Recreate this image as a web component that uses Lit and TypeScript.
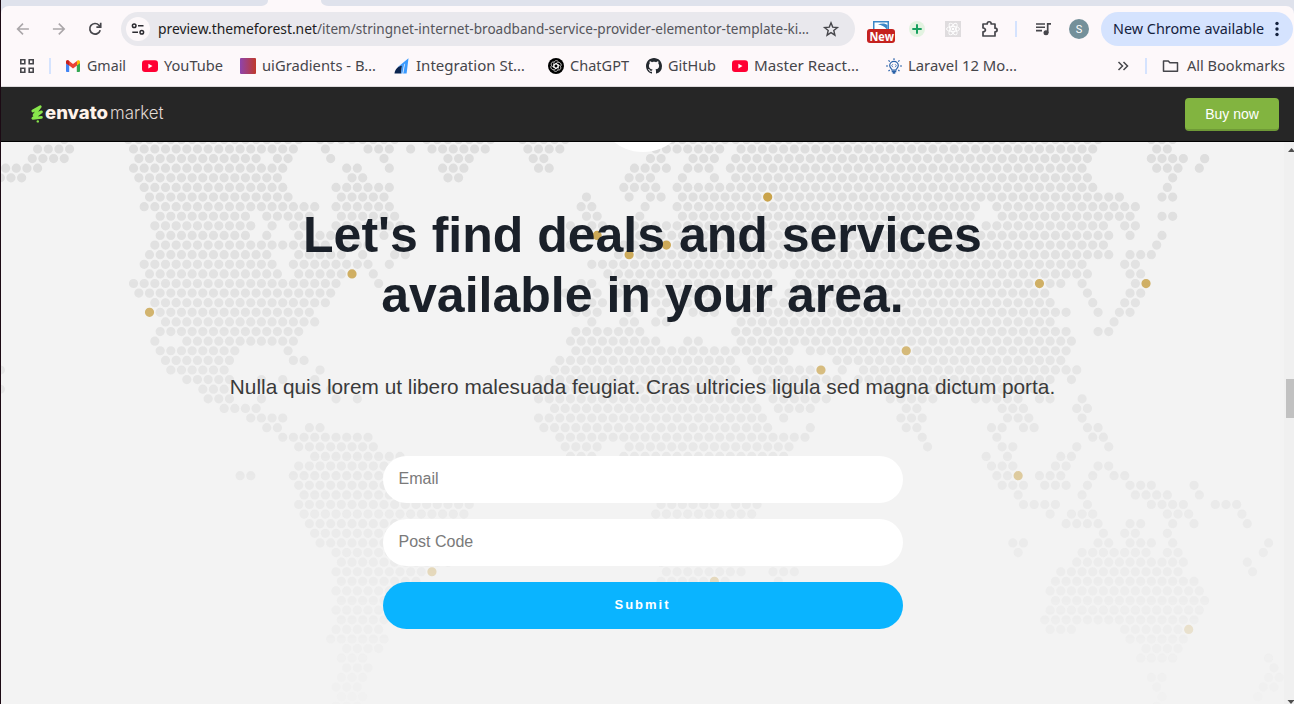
import { LitElement, html, svg, css } from "lit";
import { customElement } from "lit/decorators.js";

/* Dotted world map: for each lattice row, the horizontal spans that hold dots. */
const MAP_ROWS: string[] = [
  "64 128-302 320-395 430-490 520-560 640-1095 1150-1175",
  "38-70 134-294 326 368-389 411 432-485 528-560 656-720 741-1093 1157-1167",
  "32-64 139-256 278-288 331 384 448-469 533-544 650-661 693-714 736-1087 1151-1183 1204",
  "6-38 134-283 347-357 389 443-464 539-549 634-666 688-709 730-1082 1157-1178 1199",
  "1-22 139-278 352-363 448-459 629-650 682 714 736-1087 1172",
  "144-283 336-389 624-656 677-1093 1167",
  "150-288 341-384 586 629 650-661 682-1119 1162-1173",
  "144-315 336-389 581-592 645 677-975 997-1135",
  "160-246 267-310 341-395 586-597 640 682-970 1002-1130 1162-1173",
  "155-251 272 294-304 336-400 570 592-602 634-645 661-965 986-1107 1125-1135",
  "160-246 267 299 320-352 384 576-586 640 661-970 981-1109 1130 1162",
  "155-326 347-368 400 570 624-656 677-1103 1157",
  "150-267 299-343 363 395-405 618 640-1109 1130-1151",
  "144-272 294-368 389 592-1082 1125-1135",
  "150-278 299-341 373 608-720 736-768 800-1087 1130-1141",
  "134-336 378 581-592 613-715 741-768 795-1031 1050-1061 1082 1135",
  "139-294 310-331 565-575 597 618 650-715 736-763 784-1045 1087 1130-1141",
  "155-325 581-602 634 656-666 688-709 731-1050 1093 1125-1135",
  "160-310 576-597 634 661 693-714 740-1066 1098 1119-1130",
  "166-315 592 624-634 656-666 736-1050 1114",
  "160-299 576-639 736-1066 1098-1109",
  "155 187-294 571-655 687-698 742-1071",
  "160-235 288 576-788 810-1066",
  "166-230 294-304 560-730 752-783 837-1061",
  "1 171-224 320 555-737 757-810 842 864-1077",
  "187-230 262 283 315 539-730 762-834 858-1050 1071",
  "1 203-224 299 330 544-736 768-815 885-1045",
  "208-230 262 336 357 539-755 774-827 890-933 975-1018 1039-1050 1082",
  "224-256 555-757 778-810 906-917 1002-1023 1077-1087",
  "251-283 539-763 783 900-922 1007-1029 1082",
  "267-278 310-320 544-768 810 906-917 991-1002 1023-1034 1087-1098",
  "283-368 560-805 922 997 1093-1103",
  "299-373 565-598 630-788 927 1002-1013 1077 1109",
  "315-400 571-592 624-784 986 1007 1061-1071",
  "299-410 991-1013 1055-1066 1098-1109",
  "240-251 294-410 997-1007 1039-1061 1093 1114-1125",
  "299-410 1002-1023 1045-1066 1087 1130-1151 1194",
  "304-410 1018 1082 1135-1167 1199",
  "299-470 662-715 736-757 1023-1055 1087 1151-1183 1215-1237",
  "304-464 656-752 1050 1071-1093 1167-1188 1242",
  "310-460 1066-1098 1130-1141 1173 1194 1247",
  "315-440 1103 1125-1135 1167",
  "320-440 1013-1023 1098-1109 1130-1151 1173 1268",
  "336-440 1018 1082-1146 1167-1178 1263",
  "342-448 661 1077-1183 1247",
  "336-421 667-741 773-794 1061-1178 1252",
  "342-416 661-704 725 778 1055-1194",
  "336-400 1050-1199",
  "342-400 1055-1204",
  "336-400 1050-1199",
  "342-400 1045-1194",
  "336-379 1050-1071 1125-1178",
  "331-385 1130-1183",
  "347-379 1146-1178",
  "342-363 1141-1173 1268",
  "347-368 1274",
  "342-363 1151-1162 1268-1279",
  "336-358 1157 1263-1274",
  "342-363 1162 1258",
  "336-358 1152",
];

/* Highlighted cities: [row, x]. */
const CITIES: [number, number][] = [
  [5, 767.5], [9, 597], [10, 666], [11, 629], [13, 352], [14, 1039], [14, 1146],
  [17, 149.7], [21, 906], [23, 821], [34, 1018], [44, 432], [45, 714], [50, 1188.5],
];

const STEP = 5.329;
const ORIGIN = 0.3;
const dotY = (row: number) => 7 + row * 9.608;
/* Odd and even rows are shifted by half a cell. */
const snap = (x: number, row: number) => {
  const odd = Math.abs(row + 1) % 2;
  return 2 * Math.round(((x - ORIGIN) / STEP - odd) / 2) + odd;
};
const dot = (h: number, row: number) =>
  `M${(ORIGIN + h * STEP - 4.6).toFixed(2)} ${dotY(row).toFixed(2)}a4.6 4.6 0 1 0 9.2 0a4.6 4.6 0 1 0 -9.2 0`;

const gold = new Set(CITIES.map(([r, x]) => `${r}:${snap(x, r)}`));
const landPath = MAP_ROWS.map((spans, i) => {
  const row = i - 1;
  let d = "";
  for (const span of spans.split(" ")) {
    const [a, b = a] = span.split("-").map(Number);
    for (let h = snap(a, row); h <= snap(b, row); h += 2) {
      if (!gold.has(`${row}:${h}`)) d += dot(h, row);
    }
  }
  return d;
}).join("");
const cityPath = CITIES.map(([r, x]) => dot(snap(x, r), r)).join("");

const label = (text: string, width: number, cls = "ui") => html`
  <svg class="label" width=${width} height="20">
    <text class=${cls} x="0" y="15" textLength=${width} lengthAdjust="spacingAndGlyphs">${text}</text>
  </svg>`;

const youtube = html`<svg width="16" height="16" viewBox="0 0 16 16"><rect y="2.3" width="16" height="11.6" rx="3" fill="#ff0033"/><path d="M6.4 5.7v4.8L10.5 8.1z" fill="#fff"/></svg>`;

const icons = {
  gmail: html`<svg width="16" height="16" viewBox="0 0 16 16"><path d="M1 4v9c0 .5.4 1 1 1h2.2V7.3z" fill="#4285f4"/><path d="M15 4v9c0 .5-.4 1-1 1h-2.2V7.3z" fill="#34a853"/><path d="M11.8 4v3.6L15 5.2V4c0-1.6-1.7-2.2-2.8-1.3z" fill="#fbbc04"/><path d="M1 4c0-1.6 1.7-2.2 2.8-1.3L8 5.9l4-3v4.6L8 10.5 4.2 7.6 1 5.2z" fill="#ea4335"/><path d="M1 4c0-1.6 1.7-2.2 3.2-1v4.6L1 5.2z" fill="#c5221f"/></svg>`,
  youtube,
  gradient: html`<svg width="16" height="16"><defs><linearGradient id="g"><stop stop-color="#8e44ad"/><stop offset="1" stop-color="#c0392b"/></linearGradient></defs><rect width="16" height="16" rx="1" fill="url(#g)"/></svg>`,
  integration: html`<svg width="16" height="16" viewBox="0 0 16 16"><path d="M14.500.3 12.600 15.500H9L10.500 6.500 3.500 9.300z" fill="#3b9bff"/><path d="M.5 15.500c.6-4.600 3.300-6.800 7.500-7.900l-.8 7.900z" fill="#0b2550"/><path d="M8 7.500 10.600 4.800 8.600 15.500H7.200z" fill="#3b9bff"/><path d="M10.700 5.800 8.800 15.500" stroke="#fdf8fa" stroke-width=".6"/></svg>`,
  chatgpt: html`<svg width="16" height="16" viewBox="0 0 16 16"><circle cx="8" cy="8" r="8" fill="#000"/><g fill="none" stroke="#fff" stroke-width=".7">${[0, 60, 120, 180, 240, 300].map((a) => svg`<path transform="rotate(${a} 8 8)" d="M5.900 9.300V5.100c0-2.700 3.600-3.300 4.500-1.200M5.900 6.800 8 5.600l2.800 1.600"/>`)}</g></svg>`,
  github: html`<svg width="16" height="16" viewBox="0 0 16 16"><path fill="#24292f" d="M8 0C3.580 0 0 3.580 0 8c0 3.540 2.290 6.530 5.470 7.590.4.070.55-.17.55-.38 0-.19-.01-.82-.01-1.490-2.010.37-2.530-.49-2.690-.94-.09-.23-.48-.94-.82-1.130-.28-.15-.68-.52-.01-.53.63-.01 1.080.58 1.230.82.72 1.210 1.870.87 2.330.66.07-.52.28-.87.51-1.070-1.780-.2-3.640-.89-3.640-3.950 0-.87.31-1.590.82-2.150-.08-.2-.36-1.020.08-2.120 0 0 .67-.21 2.200.82.64-.18 1.320-.27 2-.27s1.360.09 2 .27c1.530-1.040 2.200-.82 2.200-.82.44 1.100.16 1.920.08 2.120.51.56.82 1.270.82 2.150 0 3.070-1.870 3.750-3.650 3.950.29.25.54.73.54 1.480 0 1.070-.01 1.930-.01 2.200 0 .21.15.46.55.38A8.010 8.010 0 0 0 16 8c0-4.420-3.580-8-8-8z"/></svg>`,
  laravel: html`<svg width="16" height="16" viewBox="0 0 16 16" fill="none" stroke="#2b62a8" stroke-width="1.200"><path d="M6 12c0-1.100-2.300-1.900-2.300-4.400a4.300 4.300 0 0 1 8.600 0c0 2.500-2.300 3.300-2.300 4.400z"/><path d="M6.900 6.200 5.700 7.700l1.200 1.500M9.100 6.200l1.200 1.500-1.200 1.500" stroke-width=".8"/><path d="M5.700 13.400h4.600M6.700 15h2.600" stroke-width="1.700"/><path d="M8 .2v1.800M2.500 2.300l1.300 1.300M13.500 2.300l-1.300 1.300M0 8h2M14 8h2M2.500 13.200l1.200-1.200M13.500 13.200l-1.200-1.200"/></svg>`,
};

const BOOKMARKS: { icon: unknown; text: string; width: number }[] = [
  { icon: icons.gmail, text: "Gmail", width: 39 },
  { icon: icons.youtube, text: "YouTube", width: 59 },
  { icon: icons.gradient, text: "uiGradients - B…", width: 114 },
  { icon: icons.integration, text: "Integration St…", width: 109 },
  { icon: icons.chatgpt, text: "ChatGPT", width: 59 },
  { icon: icons.github, text: "GitHub", width: 48 },
  { icon: icons.youtube, text: "Master React…", width: 105 },
  { icon: icons.laravel, text: "Laravel 12 Mo…", width: 109 },
];

@customElement("browser-chrome")
class BrowserChrome extends LitElement {
  static styles = css`
    :host { display: block; height: 87px; background: #dfe2ec; font-family: "Noto Sans", sans-serif; }
    svg { display: block; flex: none; overflow: visible; }
    .tabs { height: 6px; display: flex; padding-left: 258px; }
    .panel { height: 80px; background: #fdf8fa; border-radius: 8px 8px 0 0; border-bottom: 1px solid #dedbdd; }
    .toolbar { height: 46px; display: flex; align-items: center; padding-left: 14px; }
    .nav { display: flex; gap: 20px; width: 106px; }
    .omnibox { display: flex; align-items: center; box-sizing: border-box; width: 734px; height: 34px; border-radius: 17px; background: #e9e8ed; padding: 0 16px 0 5px; }
    .site { display: grid; place-items: center; width: 24px; height: 24px; border-radius: 50%; background: #fdf8fa; margin-right: 8px; }
    .url { display: flex; flex: 1; }
    .ui { font-family: "Noto Sans", sans-serif; font-size: 14.500px; fill: #46464b; }
    .host { font-size: 14.500px; fill: #1d1c21; }
    .path { font-size: 14.500px; fill: #55555b; }
    .update-text { fill: #14213d; font-size: 14.500px; }
    .ext { display: flex; align-items: center; width: 246px; }
    .avatar { display: grid; place-items: center; width: 20px; height: 20px; border-radius: 50%; background: #74909a; color: #fff; font: 11px Roboto, sans-serif; margin-left: 17px; }
    .divider { width: 2px; height: 16px; background: #d5e3fe; }
    .update { display: flex; align-items: center; box-sizing: border-box; width: 192px; height: 34px; border-radius: 17px; background: #d5e3fe; padding-left: 12px; gap: 11px; }
    .bookmarks { display: flex; align-items: center; height: 28px; padding-left: 18px; }
    .list { display: grid; grid-template-columns: 77px 98px 154px 154px 98px 86px 154px 231px; margin-left: 14px; }
    .bookmark { display: flex; align-items: center; gap: 6px; }
    .all { display: flex; align-items: center; gap: 8px; margin-left: 15px; }
  `;

  render() {
    return html`
      <div class="tabs">
        <svg width="72" height="6"><path d="M0 6C6 6 9 4 9 0h53c0 4 3 6 10 6z" fill="#fdf8fa"/></svg>
      </div>
      <div class="panel">
        <div class="toolbar">
          <div class="nav">
            <svg width="16" height="16" fill="none" stroke="#aaa6a9" stroke-width="1.600"><path d="M13.900 8H3M8 2.600 2.600 8 8 13.400"/></svg>
            <svg width="16" height="16" fill="none" stroke="#aaa6a9" stroke-width="1.600"><path d="M1.900 8H13M7.800 2.600 13.200 8l-5.400 5.400"/></svg>
            <svg width="16" height="16" fill="none" stroke="#46464b" stroke-width="1.700"><path d="M13.200 9.200A5.300 5.300 0 1 1 12 4.200L13.300 6"/><path d="M13.700 1.800v4.400H9.400"/></svg>
          </div>
          <div class="omnibox">
            <div class="site">
              <svg width="14" height="12" fill="none" stroke="#2c2b30" stroke-width="1.500"><circle cx="3.200" cy="2.800" r="1.800"/><path d="M7 2.800h5.500M1.300 9.200H7"/><circle cx="10.800" cy="9.200" r="1.800"/></svg>
            </div>
            <div class="url">
              ${label("preview.themeforest.net", 159, "ui host")}
              ${label("/item/stringnet-internet-broadband-service-provider-elementor-template-ki…", 492, "ui path")}
            </div>
            <svg width="16" height="16" viewBox="0 0 16 16" fill="none" stroke="#46464b" stroke-width="1.400"><path d="m8 1.800 1.700 4.300 4.700.4-3.600 3 1.100 4.600L8 11.600l-3.900 2.500 1.100-4.600-3.600-3 4.700-.4z"/></svg>
          </div>
          <div class="ext">
            <svg width="30" height="26" style="margin-left:11px" viewBox="0 0 30 26"><path d="M7 5h16v9H7z" fill="#3c87c7"/><path d="M8.500 6.500h13V13h-13z" fill="#fff"/><path d="M12 8.500c4-1.800 7.500-1.200 9.500.5V13h-1c-2-2.800-5-4-8.500-4.500z" fill="#3c87c7"/><rect x="1" y="13" width="28" height="14" rx="3" fill="#c5221f"/><text x="3.500" y="24.500" font-size="11.500" font-weight="700" fill="#fff" font-family="Noto Sans, sans-serif" textLength="24.500" lengthAdjust="spacingAndGlyphs">New</text></svg>
            <svg width="16" height="16" style="margin-left:13px"><circle cx="8" cy="8" r="8" fill="#e3f3e1"/><path d="M8 3.300v9.400M3.300 8h9.400" stroke="#18a05f" stroke-width="2"/></svg>
            <svg width="16" height="16" style="margin-left:20px" viewBox="0 0 16 16"><path d="M0 0h16v16H0z" fill="#dfdcde"/><g fill="none" stroke="#fff" stroke-width=".9"><ellipse cx="8" cy="8" rx="6.500" ry="2.600"/><ellipse cx="8" cy="8" rx="6.500" ry="2.600" transform="rotate(60 8 8)"/><ellipse cx="8" cy="8" rx="6.500" ry="2.600" transform="rotate(120 8 8)"/></g><circle cx="8" cy="8" r="1.300" fill="#fff"/></svg>
            <svg width="18" height="18" style="margin-left:20px" viewBox="0 0 18 18"><path d="M2 4h4.200c0-3 4-3 4 0H14v4.200c2.800 0 2.800 3.600 0 3.600V16H2v-4.200c3.200-.4 3.200-3.400 0-3.800z" fill="none" stroke="#46464b" stroke-width="1.700" stroke-linejoin="round"/></svg>
            <div class="divider" style="margin-left:16px"></div>
            <svg width="17" height="14" style="margin-left:18px" viewBox="0 0 17 14"><path d="M1 2h9M1 5.300h9M1 8.600h6" stroke="#46464b" stroke-width="1.600"/><path d="M12.700 11V1.800H16" fill="none" stroke="#46464b" stroke-width="1.700"/><circle cx="11" cy="10.700" r="2.500" fill="#46464b"/></svg>
            <div class="avatar">S</div>
          </div>
          <div class="update">
            ${label("New Chrome available", 151, "ui update-text")}
            <svg width="4" height="16" fill="#14213d"><circle cx="2" cy="2.500" r="1.700"/><circle cx="2" cy="8" r="1.700"/><circle cx="2" cy="13.500" r="1.700"/></svg>
          </div>
        </div>
        <div class="bookmarks">
          <svg width="16" height="16" fill="none" stroke="#46464b" stroke-width="1.600"><path d="M1.800 1.800h4v4h-4zM10.200 1.800h4v4h-4zM1.800 10.200h4v4h-4zM10.200 10.200h4v4h-4z"/></svg>
          <div class="divider" style="margin-left:14px"></div>
          <div class="list">
            ${BOOKMARKS.map((b) => html`<div class="bookmark">${b.icon}${label(b.text, b.width)}</div>`)}
          </div>
          <svg width="12" height="12" fill="none" stroke="#46464b" stroke-width="1.500"><path d="m1.500 2 4 4-4 4M6.500 2l4 4-4 4"/></svg>
          <div class="divider" style="margin-left:16px"></div>
          <div class="all">
            <svg width="17" height="16" fill="none" stroke="#46464b" stroke-width="1.500"><path d="M1.500 3h4.800l1.600 1.800h7.600V13.200h-14z" stroke-linejoin="round"/></svg>
            ${label("All Bookmarks", 98)}
          </div>
        </div>
      </div>
    `;
  }
}

@customElement("market-header")
class MarketHeader extends LitElement {
  static styles = css`
    :host { display: flex; justify-content: space-between; box-sizing: border-box; height: 55px; padding: 11px 15px 0 28px; background: #262626; border-bottom: 1px solid #000; }
    .logo { display: block; overflow: visible; }
    .envato { font: 800 18px Inter, sans-serif; fill: #fff3ea; }
    .market { font: 300 18px Inter, sans-serif; fill: #e2dad4; }
    .buy { box-sizing: border-box; width: 94px; height: 33px; border: 0; border-bottom: 2px solid #6f9a37; border-radius: 4px; background: #82b440; color: #fff; font: 14px "Liberation Sans", sans-serif; padding: 0; }
  `;
  render() {
    return html`
      <svg class="logo" width="140" height="30">
        <path d="M3.800 13 11.300 8.600 5 17 12.500 13.800 3.800 20.300 12.500 19.300" fill="none" stroke="#87e64b" stroke-width="2.700" stroke-linecap="round" stroke-linejoin="round"/>
        <circle cx="8.800" cy="23.400" r="1.200" fill="#87e64b"/>
        <text class="envato" x="16" y="21" textLength="63" lengthAdjust="spacingAndGlyphs">envato</text>
        <text class="market" x="81" y="21" textLength="53.500" lengthAdjust="spacingAndGlyphs">market</text>
      </svg>
      <button class="buy">Buy now</button>
    `;
  }
}

@customElement("deal-finder")
class DealFinder extends LitElement {
  static styles = css`
    :host { display: grid; height: 562px; overflow: hidden; background: #f3f3f3; font-family: "Liberation Sans", Arial, sans-serif; }
    .map, .content { grid-area: 1 / 1; min-width: 0; }
    .map { display: block; width: 1284px; height: 562px; }
    .dots { mask-image: linear-gradient(#000, rgba(0, 0, 0, 0.083)); }
    .badge { z-index: 1; }
    .content { display: flex; flex-direction: column; align-items: center; padding: 63px 0 0; z-index: 2; }
    h1 { margin: 0; padding-right: 1px; font-size: 50px; line-height: 60px; font-weight: 700; color: #1a2029; text-align: center; white-space: nowrap; }
    p { margin: 47px 0 0; padding-right: 1px; font-size: 20.800px; line-height: 30px; color: #3a3a3a; white-space: nowrap; }
    form { display: flex; flex-direction: column; gap: 16px; width: 520px; margin-top: 54px; }
    input, button { box-sizing: border-box; height: 47px; border: 0; border-radius: 24px; font-family: inherit; }
    input { background: #fff; padding: 0 16px 2px 15.500px; font-size: 16px; }
    input::placeholder { color: #7a7a7a; opacity: 1; }
    button { background: #0ab4ff; color: #fff; font-size: 13px; font-weight: 700; letter-spacing: 2px; padding: 0 1px 2px 0; }
  `;
  render() {
    return html`
      <svg class="map dots" viewBox="1 0 1284 562">
        <path d=${landPath} fill="#dddddd"/>
        <path d=${cityPath} fill="#c59b3a"/>
      </svg>
      <svg class="map badge" viewBox="1 0 1284 562"><circle cx="643" cy="-37" r="47" fill="#fff"/></svg>
      <div class="content">
        <h1>Let's find deals and services<br />available in your area.</h1>
        <p>Nulla quis lorem ut libero malesuada feugiat. Cras ultricies ligula sed magna dictum porta.</p>
        <form @submit=${(e: Event) => e.preventDefault()}>
          <input type="email" placeholder="Email" />
          <input type="text" placeholder="Post Code" />
          <button>Submit</button>
        </form>
      </div>
    `;
  }
}

@customElement("app-root")
class AppRoot extends LitElement {
  static styles = css`
    :host { display: block; box-sizing: border-box; width: 1294px; height: 704px; overflow: hidden; border-left: 1px solid #1c0a14; }
    .page { display: grid; grid-template-columns: 1283px 10px; }
    .scrollbar { display: flex; flex-direction: column; align-items: flex-end; background: #f0f0f0; height: 562px; }
    .arrow { display: block; }
    .thumb { width: 8px; height: 39px; background: #c1c1c1; margin-top: 227px; }
    .down { margin-top: auto; }
  `;
  render() {
    return html`
      <browser-chrome></browser-chrome>
      <market-header></market-header>
      <div class="page">
        <deal-finder></deal-finder>
        <div class="scrollbar">
          <svg class="arrow" width="8" height="10"><path d="M2 10 5.500 6 9 10z" fill="#505050"/></svg>
          <div class="thumb"></div>
          <svg class="arrow down" width="8" height="8"><path d="M1.500 4h7L5 8z" fill="#505050"/></svg>
        </div>
      </div>
    `;
  }
}
